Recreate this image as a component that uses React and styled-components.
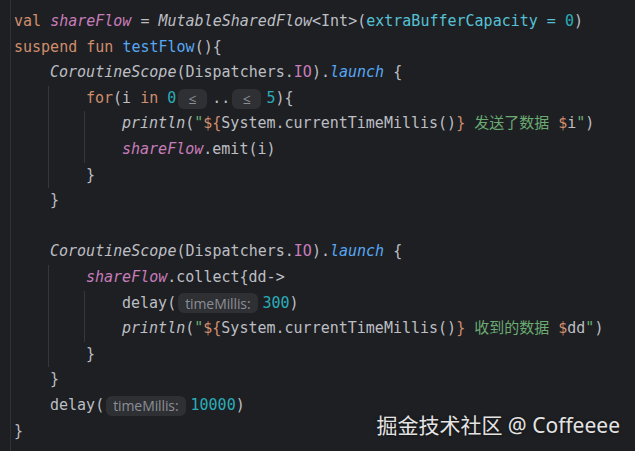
import React from "react";
import styled, { createGlobalStyle } from "styled-components";

//Styling//

const GlobalStyle = createGlobalStyle`
  html, body {
    margin: 0;
    padding: 0;
    background: #1e1f22;
  }
  #root {
    min-height: 451px;
  }
`;

const Editor = styled.div`
  position: relative;
  display: flex;
  width: 635px;
  height: 451px;
  overflow: hidden;
  background: #1e1f22;
`;

const Gutter = styled.div`
  width: 10px;
  flex-shrink: 0;
  border-right: 1px solid #2f3135;
`;

const Code = styled.div`
  padding: 9px 0 0 3px;
  font-family: "DejaVu Sans Mono", "Noto Sans CJK SC", monospace;
  font-size: 15px;
  color: #bcbec4;
`;

const Line = styled.div`
  height: 25.6px;
  line-height: 25.6px;
  white-space: pre;
  display: flex;
  align-items: center;
`;

const Nest = styled.div`
  margin-left: -2px;
  padding-left: 37px;
  border-left: 1px solid ${(p) => (p.$guide ? "#35373c" : "transparent")};
`;

const Tok = styled.span`
  color: ${(p) => p.$c || "inherit"};
  font-style: ${(p) => (p.$i ? "italic" : "normal")};
`;

const Hint = styled.span`
  display: inline-flex;
  align-items: center;
  justify-content: center;
  height: 20px;
  min-width: ${(p) => (p.$sym ? "29px" : "auto")};
  box-sizing: border-box;
  padding: 0 7px;
  margin: 0 5px 0 2px;
  border-radius: 6px;
  background: #2e3034;
  color: #8b8e94;
  font-family: "Open Sans", "Noto Sans", sans-serif;
  font-size: 14px;
  letter-spacing: -0.1px;
`;

const Watermark = styled.div`
  position: absolute;
  right: 15px;
  bottom: 12px;
  font-family: "Noto Sans", "Noto Sans CJK SC", sans-serif;
  font-size: 21px;
  color: #e4e4e4;
  text-shadow: 0 0 3px rgba(0, 0, 0, 0.5);
`;

//Colours//

const KW = "#cf8e6d";
const PROP = "#c77dbb";
const FN = "#56a8f5";
const NUM = "#2aacb8";
const ARG = "#56c1d6";
const STR = "#6aab73";

//Component//

const App = () => (
  <>
    <GlobalStyle />
    <Editor>
      <Gutter />
      <Code>
        <Line>
          <Tok $c={KW}>val </Tok>
          <Tok $c={PROP} $i>shareFlow</Tok>
          {" = "}
          <Tok $i>MutableSharedFlow</Tok>
          {"<Int>("}
          <Tok $c={ARG}>extraBufferCapacity = </Tok>
          <Tok $c={NUM}>0</Tok>
          {")"}
        </Line>
        <Line>
          <Tok $c={KW}>suspend fun </Tok>
          <Tok $c={FN}>testFlow</Tok>
          {"(){"}
        </Line>
        <Nest>
          <Line>
            <Tok $i>CoroutineScope</Tok>
            {"(Dispatchers."}
            <Tok $c={PROP}>IO</Tok>
            {")."}
            <Tok $c={FN} $i>launch</Tok>
            {" {"}
          </Line>
          <Nest $guide>
            <Line>
              <Tok $c={KW}>for</Tok>
              {"(i "}
              <Tok $c={KW}>in </Tok>
              <Tok $c={NUM}>0</Tok>
              <Hint $sym>≤</Hint>
              {".."}
              <Hint $sym>≤</Hint>
              <Tok $c={NUM}>5</Tok>
              {"){"}
            </Line>
            <Nest $guide>
              <Line>
                <Tok $i>println</Tok>
                {"("}
                <Tok $c={STR}>"</Tok>
                <Tok $c={KW}>{"${"}</Tok>
                {"System.currentTimeMillis()"}
                <Tok $c={KW}>{"}"}</Tok>
                <Tok $c={STR}> 发送了数据 </Tok>
                <Tok $c={KW}>$</Tok>
                {"i"}
                <Tok $c={STR}>"</Tok>
                {")"}
              </Line>
              <Line>
                <Tok $c={PROP} $i>shareFlow</Tok>
                {".emit(i)"}
              </Line>
            </Nest>
            <Line>{"}"}</Line>
          </Nest>
          <Line>{"}"}</Line>
          <Line />
          <Line>
            <Tok $i>CoroutineScope</Tok>
            {"(Dispatchers."}
            <Tok $c={PROP}>IO</Tok>
            {")."}
            <Tok $c={FN} $i>launch</Tok>
            {" {"}
          </Line>
          <Nest $guide>
            <Line>
              <Tok $c={PROP} $i>shareFlow</Tok>
              {".collect{dd->"}
            </Line>
            <Nest $guide>
              <Line>
                {"delay("}
                <Hint>timeMillis:</Hint>
                <Tok $c={NUM}>300</Tok>
                {")"}
              </Line>
              <Line>
                <Tok $i>println</Tok>
                {"("}
                <Tok $c={STR}>"</Tok>
                <Tok $c={KW}>{"${"}</Tok>
                {"System.currentTimeMillis()"}
                <Tok $c={KW}>{"}"}</Tok>
                <Tok $c={STR}> 收到的数据 </Tok>
                <Tok $c={KW}>$</Tok>
                {"dd"}
                <Tok $c={STR}>"</Tok>
                {")"}
              </Line>
            </Nest>
            <Line>{"}"}</Line>
          </Nest>
          <Line>{"}"}</Line>
          <Line>
            {"delay("}
            <Hint>timeMillis:</Hint>
            <Tok $c={NUM}>10000</Tok>
            {")"}
          </Line>
        </Nest>
        <Line>{"}"}</Line>
      </Code>
      <Watermark>掘金技术社区 @ Coffeeee</Watermark>
    </Editor>
  </>
);

export default App;
